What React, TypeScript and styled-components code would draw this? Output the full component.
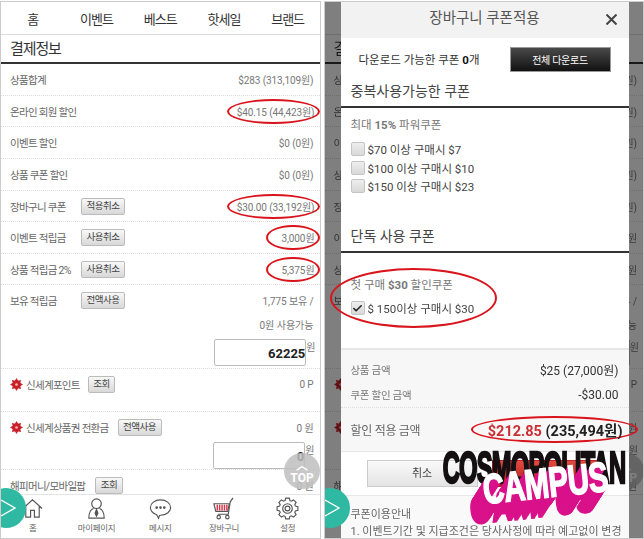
import React from 'react';
import styled, { createGlobalStyle } from 'styled-components';
import { Check } from 'lucide-react';

const GlobalStyle = createGlobalStyle`
  html, body {
    margin: 0;
    padding: 0;
    background: #fff;
  }
  body {
    font-family: Roboto, 'Noto Sans CJK KR', sans-serif;
    overflow: hidden;
  }
`;

const Screen = styled.div`
  position: relative;
  display: flex;
  gap: 3px;
  width: 644px;
  height: 539px;
  overflow: hidden;
  filter: blur(0.4px);
`;

const Phone = styled.div`
  position: relative;
  width: 321px;
  height: 538px;
  margin-top: 1px;
  box-sizing: border-box;
  border: 1px solid #ccc;
  overflow: hidden;
  background: #fff;
`;

const Page = styled.div`
  display: flex;
  flex-direction: column;
  height: 100%;
`;

const TopNav = styled.nav`
  display: grid;
  grid-template-columns: repeat(5, 1fr);
  align-items: center;
  height: 32px;
  flex: none;
  border-bottom: 1px solid #ddd;
`;

const NavItem = styled.span`
  text-align: center;
  font-size: 13px;
  letter-spacing: -1px;
  color: #333;
`;

const Title = styled.h2`
  flex: none;
  height: 27px;
  margin: 0;
  padding-left: 9px;
  font-size: 15px;
  line-height: 29px;
  font-weight: 400;
  letter-spacing: -1.1px;
  color: #333;
  border-bottom: 2px solid #333;
`;

const Rows = styled.div`
  flex: 1;
  min-height: 0;
  overflow: hidden;
`;

const Row = styled.div<{ $height?: number }>`
  display: flex;
  align-items: center;
  height: ${(p) => p.$height || 32}px;
  box-sizing: border-box;
  padding: 0 6px 0 9px;
  border-bottom: 1px dotted #ddd;
`;

const TallRow = styled.div<{ $height: number }>`
  height: ${(p) => p.$height}px;
  box-sizing: border-box;
  border-bottom: 1px dotted #ddd;
`;

const RowHead = styled.div`
  display: flex;
  align-items: center;
  height: 30px;
  padding: 0 6px 0 9px;
`;

const Label = styled.span<{ $fixed?: boolean }>`
  font-size: 10.5px;
  letter-spacing: -0.7px;
  color: #666;
  white-space: nowrap;
  ${(p) => p.$fixed && 'width: 71px; flex: none;'}
`;

const Value = styled.span`
  margin-left: auto;
  font-size: 10px;
  letter-spacing: -0.1px;
  color: #777;
  white-space: nowrap;
`;

const Ring = styled.span<{ $small?: boolean }>`
  margin-left: auto;
  margin-right: -6px;
  padding: ${(p) => (p.$small ? '3px 3px 3px 13px' : '3px 3px 3px 8px')};
  font-size: 10px;
  letter-spacing: -0.1px;
  color: #777;
  white-space: nowrap;
  border: 2px solid #d9141c;
  border-radius: 50%;
`;

const MiniButton = styled.span<{ $gap?: number }>`
  flex: none;
  margin-left: ${(p) => p.$gap || 0}px;
  padding: 0 4.5px;
  height: 15px;
  line-height: 14px;
  font-size: 9.5px;
  letter-spacing: -0.5px;
  color: #444;
  border: 1px solid #bbb;
  border-radius: 2px;
  background: linear-gradient(#f8f8f8, #d8d8d8);
`;

const NoteLine = styled.div`
  height: 24px;
  padding-right: 6px;
  text-align: right;
  font-size: 10px;
  line-height: 22px;
  color: #777;
`;

const InputLine = styled.div<{ $right: number }>`
  display: flex;
  justify-content: flex-end;
  align-items: flex-start;
  padding-right: ${(p) => p.$right}px;
  font-size: 10px;
  color: #777;
`;

const Field = styled.div`
  width: 92px;
  height: 27px;
  box-sizing: border-box;
  border: 1px solid #bbb;
  border-radius: 2px;
  text-align: right;
  font-size: 13px;
  line-height: 27px;
  font-weight: 700;
  color: #222;
`;

const Mark = styled.svg`
  flex: none;
  width: 13px;
  height: 13px;
  margin-right: 3px;
`;

const TabBar = styled.div`
  flex: none;
  height: 43px;
  display: grid;
  grid-template-columns: repeat(5, 1fr);
  background: #fff;
  border-top: 1px solid #e4e4e4;
`;

const Tab = styled.div`
  display: flex;
  flex-direction: column;
  align-items: center;
  padding-top: 2px;
  font-size: 8.5px;
  letter-spacing: -0.3px;
  color: #666;
  svg {
    width: 23px;
    height: 23px;
    margin-bottom: 1px;
  }
`;

const TopFab = styled.div`
  position: absolute;
  left: 283px;
  top: 451px;
  width: 36px;
  height: 36px;
  border-radius: 50%;
  background: rgba(190, 190, 190, 0.85);
  color: #fff;
  font-size: 12px;
  font-weight: 700;
  text-align: center;
  line-height: 12px;
  padding-top: 7px;
  box-sizing: border-box;
`;

const SideFab = styled.div`
  position: absolute;
  left: -15px;
  top: 486px;
  width: 40px;
  height: 40px;
  border-radius: 50%;
  background: #2fb9a2;
  display: flex;
  align-items: center;
  justify-content: flex-end;
  padding-right: 10px;
  box-sizing: border-box;
`;

const Dim = styled.div`
  position: absolute;
  inset: 0;
  background: rgba(0, 0, 0, 0.5);
`;

const Modal = styled.div`
  position: absolute;
  left: 16px;
  top: 0;
  bottom: 0;
  width: 288px;
  display: flex;
  flex-direction: column;
  background: #fff;
`;

const ModalHead = styled.div`
  position: relative;
  flex: none;
  height: 36px;
  background: #f2f2f2;
  text-align: center;
  font-size: 14.5px;
  line-height: 34px;
  color: #555;
`;

const Close = styled.svg`
  position: absolute;
  right: 12px;
  top: 12px;
  width: 11px;
  height: 11px;
`;

const DownloadRow = styled.div`
  flex: none;
  display: flex;
  align-items: center;
  justify-content: space-between;
  height: 36px;
  padding: 6px 18px 0 18px;
  box-sizing: border-box;
  font-size: 11.5px;
  color: #333;
  b {
    color: #111;
  }
`;

const DarkButton = styled.div`
  width: 101px;
  height: 25px;
  text-align: center;
  font-size: 10px;
  line-height: 25px;
  letter-spacing: -0.3px;
  color: #fff;
  background: linear-gradient(#4a4a4a, #111);
  border: 1px solid #999;
  box-sizing: border-box;
`;

const SectionTitle = styled.div<{ $height: number }>`
  flex: none;
  display: flex;
  align-items: flex-end;
  height: ${(p) => p.$height}px;
  padding: 0 0 6px 10px;
  box-sizing: border-box;
  font-size: 14px;
  color: #444;
  border-bottom: 2px solid #333;
`;

const CouponGroup = styled.div<{ $height: number }>`
  flex: none;
  height: ${(p) => p.$height}px;
  padding: 8px 10px 0;
  box-sizing: border-box;
`;

const GroupTitle = styled.div<{ $after: number; $before?: number }>`
  font-size: 11.5px;
  line-height: 18px;
  margin-top: ${(p) => p.$before || 0}px;
  margin-bottom: ${(p) => p.$after}px;
  color: #777;
`;

const Option = styled.div`
  display: flex;
  align-items: center;
  gap: 3px;
  height: 18.5px;
  font-size: 11.5px;
  color: #444;
`;

const Box = styled.span`
  flex: none;
  display: flex;
  align-items: center;
  justify-content: center;
  width: 12px;
  height: 12px;
  border: 1px solid #c4c4c4;
  border-radius: 2px;
  background: linear-gradient(#eee, #d8d8d8);
`;

const BigRing = styled.div`
  position: absolute;
  left: -21px;
  top: 7px;
  width: 167px;
  height: 60px;
  box-sizing: border-box;
  border: 2px solid #d9141c;
  border-radius: 50%;
`;

const RingAnchor = styled.div`
  position: relative;
`;

const Summary = styled.div`
  flex: none;
  background: #f7f7f7;
  border-top: 2px solid #e6e6e6;
`;

const SummaryRows = styled.div`
  padding: 7px 10px 2px;
  height: 58px;
  box-sizing: border-box;
  border-bottom: 1px dotted #ddd;
`;

const SummaryRow = styled.div`
  display: flex;
  justify-content: space-between;
  align-items: center;
  height: 25px;
  font-size: 12px;
  color: #333;
`;

const MutedLabel = styled.span`
  font-size: 10.5px;
  letter-spacing: -0.3px;
  color: #777;
`;

const TotalRow = styled.div`
  display: flex;
  justify-content: space-between;
  align-items: center;
  height: 44px;
  padding: 0 10px;
  box-sizing: border-box;
  border-bottom: 1px solid #e6e6e6;
`;

const TotalLabel = styled.span`
  font-size: 12px;
  letter-spacing: -0.3px;
  color: #666;
`;

const TotalRing = styled.span`
  margin-right: -19px;
  padding: 1px 13px 1px 15px;
  font-size: 14.5px;
  font-weight: 700;
  color: #222;
  white-space: nowrap;
  border: 2px solid #d9141c;
  border-radius: 50%;
  em {
    font-style: normal;
    color: #cc2e33;
  }
`;

const ButtonRow = styled.div`
  flex: none;
  display: flex;
  gap: 14px;
  height: 44px;
  padding: 8px 26px 0;
  box-sizing: border-box;
  background: #fff;
  border-bottom: 1px solid #e6e6e6;
`;

const ActionButton = styled.div<{ $primary?: boolean }>`
  flex: 1;
  height: 25px;
  text-align: center;
  font-size: 11px;
  line-height: 25px;
  color: ${(p) => (p.$primary ? '#fff' : '#444')};
  border: 1px solid ${(p) => (p.$primary ? '#b22' : '#ccc')};
  background: ${(p) => (p.$primary ? 'linear-gradient(#e04a40, #b81c1c)' : 'linear-gradient(#fafafa, #e4e4e4)')};
`;

const Guide = styled.div`
  padding: 10px 10px 0;
  font-size: 11px;
  line-height: 17px;
  color: #666;
  white-space: nowrap;
  background: #f9f9f9;
  flex: 1;
`;

const Logo = styled.div`
  position: absolute;
  left: 443px;
  top: 450px;
  width: 182px;
  height: 80px;
`;

const LogoTop = styled.div`
  display: flex;
  justify-content: center;
  width: 182px;
  font-family: 'Liberation Sans', sans-serif;
  font-size: 44px;
  line-height: 36px;
  font-weight: 700;
  color: #141012;
  -webkit-text-stroke: 2.4px #141012;
  letter-spacing: -1.5px;
  transform: scaleX(0.54);
  white-space: nowrap;
`;

const campusShadow = Array.from({ length: 30 }, (_, i) => {
  const step = (i + 1) * 0.6;
  return `${(-step * 1.25).toFixed(2)}px ${(step * 1.1).toFixed(2)}px 0 #d9128a`;
}).join(', ');

const LogoBottom = styled.div`
  position: absolute;
  left: 40px;
  top: 20px;
  font-family: 'Liberation Sans', sans-serif;
  font-size: 42px;
  line-height: 40px;
  font-weight: 700;
  letter-spacing: -0.5px;
  color: #fff;
  -webkit-text-stroke: 1.6px #fff;
  transform: rotate(-6deg) scaleX(0.7);
  transform-origin: 0 50%;
  white-space: nowrap;
  text-shadow: ${campusShadow};
`;

const navItems = ['홈', '이벤트', '베스트', '핫세일', '브랜드'];

function Flower() {
  return (
    <Mark viewBox="0 0 24 24">
      {[0, 45, 90, 135].map((a) => (
        <path key={a} d="M12 0l3.500 6v12L12 24l-3.500-6V6z" fill="#c8202a" transform={`rotate(${a} 12 12)`} />
      ))}
      <circle cx="12" cy="12" r="2.500" fill="#f5b5b0" />
    </Mark>
  );
}

function gearPath(): string {
  const points: string[] = [];
  for (let i = 0; i < 8; i += 1) {
    const a = (i * Math.PI) / 4;
    [
      [-0.3, 8.6],
      [-0.17, 11],
      [0.17, 11],
      [0.3, 8.6],
    ].forEach(([d, r]) => {
      points.push(`${(12 + r * Math.cos(a + d)).toFixed(2)} ${(12 + r * Math.sin(a + d)).toFixed(2)}`);
    });
  }
  return `M${points.join('L')}Z`;
}

function TabIcons() {
  return (
    <TabBar>
      <Tab>
        <svg viewBox="0 0 24 24" fill="none" stroke="#555" strokeWidth="1.2">
          <path d="M2 12 12 3l10 9M5 10v11h5v-7h4v7h5V10" />
        </svg>
        홈
      </Tab>
      <Tab>
        <svg viewBox="0 0 24 24" fill="none" stroke="#555" strokeWidth="1.2">
          <circle cx="12" cy="7" r="5" />
          <path d="M9 12c-3 1-5 4-5 10h16c0-6-2-9-5-10" />
          <path d="M12 13l-1.500 4 1.500 3 1.500-3z" fill="#555" />
        </svg>
        마이페이지
      </Tab>
      <Tab>
        <svg viewBox="0 0 24 24" fill="none" stroke="#555" strokeWidth="1.2">
          <path d="M12 3c6 0 10.500 3.500 10.500 8s-4.500 8-10.500 8l-1 .2-1 3-2-3.700C4 17 1.500 14.500 1.500 11 1.500 6.500 6 3 12 3z" />
          <circle cx="8" cy="11" r=".8" fill="#555" />
          <circle cx="12" cy="11" r=".8" fill="#555" />
          <circle cx="16" cy="11" r=".8" fill="#555" />
        </svg>
        메시지
      </Tab>
      <Tab>
        <svg viewBox="0 0 24 24" fill="none" stroke="#555" strokeWidth="1.2">
          <path d="M22 1l-3 4-2 13H6" />
          <path d="M2 7h16l-1.500 8H4z" fill="#fff" />
          <path d="M5.500 8v6M8 8v6M10.500 8v6M13 8v6M15.500 8v6" stroke="#d9334a" strokeWidth="1.5" />
          <circle cx="7" cy="21" r="1.800" />
          <circle cx="16" cy="21" r="1.800" />
        </svg>
        장바구니
      </Tab>
      <Tab>
        <svg viewBox="0 0 24 24" fill="none" stroke="#555" strokeWidth="1.2">
          <path d={gearPath()} />
          <circle cx="12" cy="12" r="5" />
          <circle cx="12" cy="12" r="2.500" />
        </svg>
        설정
      </Tab>
    </TabBar>
  );
}

function Payment({ marked }: { marked: boolean }) {
  const money = (text: string, small?: boolean) =>
    marked ? <Ring $small={small}>{text}</Ring> : <Value>{text}</Value>;

  return (
    <Page>
      <TopNav>
        {navItems.map((item) => (
          <NavItem key={item}>{item}</NavItem>
        ))}
      </TopNav>
      <Title>결제정보</Title>
      <Rows>
        <Row>
          <Label>상품합계</Label>
          <Value>$283 (313,109원)</Value>
        </Row>
        <Row $height={31}>
          <Label>온라인 회원 할인</Label>
          {money('$40.15 (44,423원)')}
        </Row>
        <Row>
          <Label>이벤트 할인</Label>
          <Value>$0 (0원)</Value>
        </Row>
        <Row>
          <Label>상품 쿠폰 할인</Label>
          <Value>$0 (0원)</Value>
        </Row>
        <Row $height={31}>
          <Label $fixed>장바구니 쿠폰</Label>
          <MiniButton>적용취소</MiniButton>
          {money('$30.00 (33,192원)')}
        </Row>
        <Row>
          <Label $fixed>이벤트 적립금</Label>
          <MiniButton>사용취소</MiniButton>
          {money('3,000원', true)}
        </Row>
        <Row $height={31}>
          <Label $fixed>상품 적립금 2%</Label>
          <MiniButton>사용취소</MiniButton>
          {money('5,375원', true)}
        </Row>
        <TallRow $height={84}>
          <RowHead>
            <Label $fixed>보유 적립금</Label>
            <MiniButton>전액사용</MiniButton>
            <Value>1,775 보유 /</Value>
          </RowHead>
          <NoteLine>0원 사용가능</NoteLine>
          <InputLine $right={4}>
            <Field>62225</Field>원
          </InputLine>
        </TallRow>
        <TallRow $height={43}>
          <RowHead>
            <Flower />
            <Label>신세계포인트</Label>
            <MiniButton $gap={8}>조회</MiniButton>
            <Value>0 P</Value>
          </RowHead>
        </TallRow>
        <TallRow $height={58}>
          <RowHead>
            <Flower />
            <Label>신세계상품권 전환금</Label>
            <MiniButton $gap={9}>전액사용</MiniButton>
            <Value>0 원</Value>
          </RowHead>
          <InputLine $right={5}>
            <Field>0</Field>원
          </InputLine>
        </TallRow>
        <RowHead>
          <Label>해피머니/모바일팝</Label>
          <MiniButton $gap={10}>조회</MiniButton>
          <Value>0 원</Value>
        </RowHead>
      </Rows>
      <TabIcons />
    </Page>
  );
}

function Chevron() {
  return (
    <svg width="15" height="18" viewBox="0 0 15 18" fill="none" stroke="#fff" strokeWidth="1.3">
      <path d="M0 1l14 8L0 17" />
    </svg>
  );
}

function CouponOption({ text, checked }: { text: string; checked?: boolean }) {
  return (
    <Option>
      <Box>{checked && <Check size={11} strokeWidth={3.5} color="#222" />}</Box>
      {text}
    </Option>
  );
}

function CouponModal() {
  return (
    <Modal>
      <ModalHead>
        장바구니 쿠폰적용
        <Close viewBox="0 0 11 11" stroke="#444" strokeWidth="2">
          <path d="M0.500 0.500l10 10M10.500 0.500l-10 10" />
        </Close>
      </ModalHead>
      <DownloadRow>
        <span>
          다운로드 가능한 쿠폰 <b>0</b>개
        </span>
        <DarkButton>전체 다운로드</DarkButton>
      </DownloadRow>
      <SectionTitle $height={34}>중복사용가능한 쿠폰</SectionTitle>
      <CouponGroup $height={112}>
        <GroupTitle $after={6}>
          최대 <b>15%</b> 파워쿠폰
        </GroupTitle>
        <CouponOption text="$70 이상 구매시 $7" />
        <CouponOption text="$100 이상 구매시 $10" />
        <CouponOption text="$150 이상 구매시 $23" />
      </CouponGroup>
      <SectionTitle $height={33}>단독 사용 쿠폰</SectionTitle>
      <CouponGroup $height={95}>
        <RingAnchor>
          <BigRing />
        </RingAnchor>
        <GroupTitle $after={5} $before={15}>
          첫 구매 <b>$30</b> 할인쿠폰
        </GroupTitle>
        <CouponOption text="$ 150이상 구매시 $30" checked />
      </CouponGroup>
      <Summary>
        <SummaryRows>
          <SummaryRow>
            <MutedLabel>상품 금액</MutedLabel>
            <span>$25 (27,000원)</span>
          </SummaryRow>
          <SummaryRow>
            <MutedLabel>쿠폰 할인 금액</MutedLabel>
            <span>-$30.00</span>
          </SummaryRow>
        </SummaryRows>
        <TotalRow>
          <TotalLabel>할인 적용 금액</TotalLabel>
          <TotalRing>
            <em>$212.85</em> (235,494원)
          </TotalRing>
        </TotalRow>
      </Summary>
      <ButtonRow>
        <ActionButton>취소</ActionButton>
        <ActionButton $primary>적용</ActionButton>
      </ButtonRow>
      <Guide>
        쿠폰이용안내
        <br />
        1. 이벤트기간 및 지급조건은 당사사정에 따라 예고없이 변경
      </Guide>
    </Modal>
  );
}

function App(): React.ReactElement {
  return (
    <Screen>
      <GlobalStyle />
      <Phone>
        <Payment marked />
        <TopFab>
          ︿
          <br />
          TOP
        </TopFab>
        <SideFab>
          <Chevron />
        </SideFab>
      </Phone>
      <Phone>
        <Payment marked={false} />
        <TopFab>
          ︿
          <br />
          TOP
        </TopFab>
        <Dim />
        <CouponModal />
        <SideFab>
          <Chevron />
        </SideFab>
      </Phone>
      <Logo>
        <LogoTop>COSMOPOLITAN</LogoTop>
        <LogoBottom>CAMPUS</LogoBottom>
      </Logo>
    </Screen>
  );
}

export default App;
